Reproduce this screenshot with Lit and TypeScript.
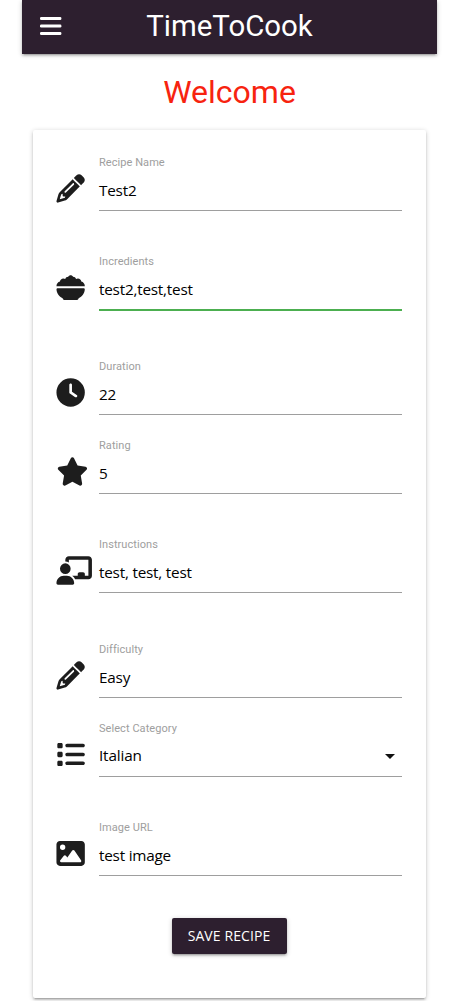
import { LitElement, html, css, svg } from "lit";
import { customElement, property } from "lit/decorators.js";

const ICONS: Record<string, { w: number; d: string }> = {
  pencil: { w: 512, d: "M410.3 231l11.3-11.3-33.9-33.9-62.1-62.1L291.7 89.8l-11.3 11.3-22.6 22.6L58.6 322.9c-10.4 10.4-18 23.3-22.2 37.4L1 480.7c-2.5 8.4-.2 17.5 6.1 23.7s15.3 8.5 23.7 6.1l120.3-35.4c14.1-4.2 27-11.8 37.4-22.2L387.7 253.7 410.3 231zM160 399.4l-9.1 22.7c-4 3.1-8.5 5.4-13.3 6.9L59.4 452l23-78.1c1.4-4.9 3.8-9.4 6.9-13.3l22.7-9.1v32c0 8.8 7.2 16 16 16h32zM362.7 18.7L348.3 33.2 325.7 55.8 314.3 67.1l33.9 33.9 62.1 62.1 33.9 33.9 11.3-11.3 22.6-22.6 14.5-14.5c25-25 25-65.5 0-90.5L453.3 18.7c-25-25-65.5-25-90.5 0zm-47.4 168l-144 144c-6.2 6.2-16.4 6.2-22.6 0s-6.2-16.4 0-22.6l144-144c6.2-6.2 16.4-6.2 22.6 0s6.2 16.4 0 22.6z" },
  bowl: { w: 512, d: "M0 232C0 192 26 158 64 149C67 118 92 94 124 94C137 94 149 98 159 104C166 78 187 62 213 62C222 43 238 34 256 34S290 43 299 62C325 62 346 78 353 104C363 98 375 94 388 94C420 94 445 118 448 149C486 158 512 192 512 232ZM24 268H488C502 268 512 278 511 292C506 362 463 422 400 449V452C400 468 388 480 372 480H140C124 480 112 468 112 452V449C49 422 6 362 1 292C0 278 10 268 24 268Z" },
  clock: { w: 512, d: "M256 0a256 256 0 1 1 0 512A256 256 0 1 1 256 0zM232 120V256c0 8 4 15.5 10.7 20l96 64c11 7.4 25.9 4.4 33.3-6.7s4.4-25.9-6.7-33.3L280 243.2V120c0-13.3-10.7-24-24-24s-24 10.7-24 24z" },
  star: { w: 576, d: "M316.9 18C311.6 7 300.4 0 288.1 0s-23.4 7-28.8 18L195 150.3 51.4 171.5c-12 1.8-22 10.2-25.7 21.7s-.7 24.2 7.9 32.7L137.8 329 113.2 474.7c-2 12 3 24.2 12.9 31.3s23 8 33.8 2.3l128.3-68.5 128.3 68.5c10.8 5.7 23.9 4.9 33.8-2.3s14.9-19.3 12.9-31.3L438.5 329 542.7 225.9c8.6-8.5 11.7-21.2 7.9-32.7s-13.7-19.9-25.7-21.7L381.2 150.3 316.9 18z" },
  teacher: { w: 640, d: "M160 64c0-35.3 28.7-64 64-64H576c35.3 0 64 28.7 64 64V352c0 35.3-28.7 64-64 64H336.8c-11.8-25.5-29.9-47.5-52.4-64H384V320c0-17.7 14.3-32 32-32h64c17.7 0 32 14.3 32 32v32h64V64L224 64v49.1C205.2 102.2 183.3 96 160 96V64zm0 64a96 96 0 1 1 0 192 96 96 0 1 1 0-192zM133.3 352h53.3C260.3 352 320 411.7 320 485.3c0 14.7-11.9 26.7-26.7 26.7H26.7C11.9 512 0 500.1 0 485.3C0 411.7 59.7 352 133.3 352z" },
  list: { w: 512, d: "M40 48C26.7 48 16 58.7 16 72v48c0 13.3 10.7 24 24 24H88c13.3 0 24-10.7 24-24V72c0-13.3-10.7-24-24-24H40zM192 64c-17.7 0-32 14.3-32 32s14.3 32 32 32H480c17.7 0 32-14.3 32-32s-14.3-32-32-32H192zm0 160c-17.7 0-32 14.3-32 32s14.3 32 32 32H480c17.7 0 32-14.3 32-32s-14.3-32-32-32H192zm0 160c-17.7 0-32 14.3-32 32s14.3 32 32 32H480c17.7 0 32-14.3 32-32s-14.3-32-32-32H192zM16 232v48c0 13.3 10.7 24 24 24H88c13.3 0 24-10.7 24-24V232c0-13.3-10.7-24-24-24H40c-13.3 0-24 10.7-24 24zM40 368c-13.3 0-24 10.7-24 24v48c0 13.3 10.7 24 24 24H88c13.3 0 24-10.7 24-24V392c0-13.3-10.7-24-24-24H40z" },
  image: { w: 512, d: "M0 96C0 60.7 28.7 32 64 32H448c35.3 0 64 28.7 64 64V416c0 35.3-28.7 64-64 64H64c-35.3 0-64-28.7-64-64V96zM323.8 202.5c-4.5-6.6-11.9-10.5-19.8-10.5s-15.4 3.9-19.8 10.5l-87 127.6L170.7 297c-4.6-5.7-11.5-9-18.7-9s-14.2 3.3-18.7 9l-64 80c-5.8 7.2-6.9 17.1-2.9 25.4s12.4 13.6 21.6 13.6h96 32H424c8.9 0 17.1-4.9 21.2-12.8s3.6-17.4-1.4-24.7l-120-176zM112 192a48 48 0 1 0 0-96 48 48 0 1 0 0 96z" },
};

@customElement("recipe-field")
class RecipeField extends LitElement {
  @property() label = "";
  @property() value = "";
  @property() icon = "pencil";
  @property({ type: Boolean }) active = false;
  @property({ type: Boolean }) select = false;

  static styles = css`
    :host { display: grid; grid-template-columns: 43px 303px; height: 60px; }
    :host([active]) { height: 61px; }
    .icon { display: block; height: 28.4px; margin-top: 23px; fill: #1d1d1d; overflow: visible; }
    .box { display: flex; flex-direction: column; box-sizing: border-box; border-bottom: 1px solid #9e9e9e; }
    .active { border-bottom: 2px solid #4caf50; }
    .label { font: 11px/14px Roboto, sans-serif; color: #9e9e9e; padding-top: 5px; height: 14px; letter-spacing: 0.06px; }
    .row { display: flex; justify-content: space-between; align-items: center; height: 22px; margin-top: 9px; padding-right: 7px; }
    .value { font: 15.3px/22px "Open Sans", "Noto Sans", sans-serif; letter-spacing: -0.22px; color: #000; white-space: pre; }
    .chosen { padding-bottom: 2px; letter-spacing: -0.15px; }
    .arrow { width: 10px; height: 5px; fill: #111; }
  `;

  render() {
    const i = ICONS[this.icon];
    return html`
      <svg class="icon" viewBox="-8 -5 ${i.w} 512" width=${(i.w / 512) * 28.4}>${svg`<path fill-rule="nonzero" d=${i.d}></path>`}</svg>
      <div class="box ${this.active ? "active" : ""}">
        <div class="label">${this.label}</div>
        <div class="row">
          <span class="value ${this.select ? "chosen" : ""}">${this.value}</span>
          ${this.select ? html`<svg class="arrow" viewBox="0 0 10 5"><path d="M0 0h10L5 5z"/></svg>` : ""}
        </div>
      </div>`;
  }
}

@customElement("app-root")
class AppRoot extends LitElement {
  static styles = css`
    :host { display: block; height: 1001px; overflow: hidden; background: #fff; font-family: Roboto, sans-serif; }
    .nav { display: grid; grid-template-columns: 1fr auto 1fr; align-items: center; box-sizing: border-box; height: 54px; margin: 0 17px 0 22px; padding: 0 18px 2px; background: #2d1f2f; color: #fff;
      box-shadow: 0 2px 2px 0 rgba(0,0,0,.14), 0 3px 1px -2px rgba(0,0,0,.12), 0 1px 5px 0 rgba(0,0,0,.2); }
    .menu { width: 22px; height: 20px; fill: #fff; }
    .brand { font-size: 29.4px; line-height: 52px; }
    .welcome { margin: 0; height: 76px; font-weight: 400; font-size: 32px; line-height: 76px; text-align: center; color: #f7230f; padding-left: 5px; }
    .card { display: flex; flex-direction: column; box-sizing: border-box; width: 393px; height: 868px; margin-left: 33px; padding: 21px 24px 0 23px; border-radius: 2px; background: #fff;
      box-shadow: 0 2px 2px 0 rgba(0,0,0,.14), 0 3px 1px -2px rgba(0,0,0,.12), 0 1px 5px 0 rgba(0,0,0,.2); }
    .g39 { margin-top: 39px; }
    .g44 { margin-top: 44px; }
    .g45 { margin-top: 45px; }
    .g19 { margin-top: 19px; }
    .save { align-self: center; width: 115px; height: 36px; margin-top: 42px; padding: 0; border: 0; border-radius: 2px; background: #2d1f2f; color: #fff; font: 14px/36px "Open Sans", "Noto Sans", sans-serif; letter-spacing: .1px; text-align: center; white-space: nowrap;
      box-shadow: 0 2px 2px 0 rgba(0,0,0,.14), 0 3px 1px -2px rgba(0,0,0,.12), 0 1px 5px 0 rgba(0,0,0,.2); }
  `;

  render() {
    return html`
      <nav class="nav">
        <svg class="menu" viewBox="0 0 22 20"><rect y="1" width="21.4" height="3" rx="1.2"/><rect y="8.5" width="21.4" height="3" rx="1.2"/><rect y="16" width="21.4" height="3" rx="1.2"/></svg>
        <span class="brand">TimeToCook</span>
      </nav>
      <h1 class="welcome">Welcome</h1>
      <main class="card">
        <recipe-field label="Recipe Name" value="Test2" icon="pencil"></recipe-field>
        <recipe-field class="g39" label="Incredients" value="test2,test,test" icon="bowl" active></recipe-field>
        <recipe-field class="g44" label="Duration" value="22" icon="clock"></recipe-field>
        <recipe-field class="g19" label="Rating" value="5" icon="star"></recipe-field>
        <recipe-field class="g39" label="Instructions" value="test, test, test" icon="teacher"></recipe-field>
        <recipe-field class="g45" label="Difficulty" value="Easy" icon="pencil"></recipe-field>
        <recipe-field class="g19" label="Select Category" value="Italian" icon="list" select></recipe-field>
        <recipe-field class="g39" label="Image URL" value="test image" icon="image"></recipe-field>
        <button class="save">SAVE RECIPE</button>
      </main>`;
  }
}
